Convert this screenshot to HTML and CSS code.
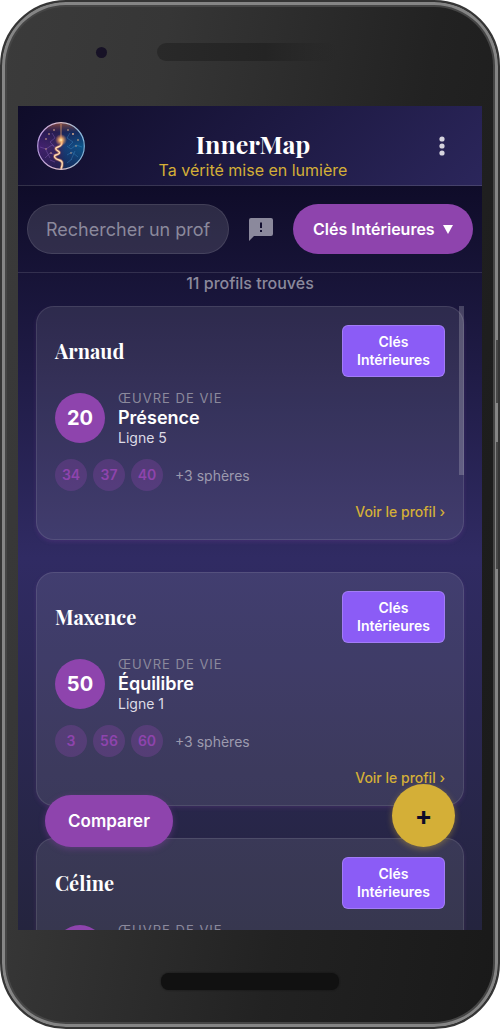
FILE: index.html
```html
<!DOCTYPE html>
<html lang="fr">
<head>
  <meta charset="UTF-8">
  <meta name="viewport" content="width=device-width, initial-scale=1.0">
  <title>InnerMap</title>
  <link rel="stylesheet" href="styles.css">
</head>
<body>
  <div class="phone">
    <span class="side-button side-button-power"></span>
    <span class="side-button side-button-volume"></span>

    <div class="bezel-top">
      <span class="camera"></span>
      <span class="speaker"></span>
    </div>

    <div class="screen">
      <header class="header">
        <svg class="logo" viewBox="0 0 48 48" aria-hidden="true">
          <defs>
            <linearGradient id="orb">
              <stop offset="0" stop-color="#43206f"/>
              <stop offset="0.42" stop-color="#392760"/>
              <stop offset="0.58" stop-color="#173f78"/>
              <stop offset="1" stop-color="#0b568b"/>
            </linearGradient>
            <linearGradient id="shade" x2="0" y2="1">
              <stop offset="0" stop-color="#8a4c3c" stop-opacity="0.9"/>
              <stop offset="0.2" stop-color="#1b1646" stop-opacity="0.6"/>
              <stop offset="0.5" stop-color="#1b1646" stop-opacity="0"/>
              <stop offset="1" stop-color="#10133a" stop-opacity="0.5"/>
            </linearGradient>
            <linearGradient id="rim">
              <stop offset="0" stop-color="#b79be0"/>
              <stop offset="0.5" stop-color="#e2c3c8"/>
              <stop offset="1" stop-color="#7db4dc"/>
            </linearGradient>
            <radialGradient id="glow">
              <stop offset="0" stop-color="#fff3c4"/>
              <stop offset="0.3" stop-color="#f9b66a" stop-opacity="0.9"/>
              <stop offset="1" stop-color="#f08a5a" stop-opacity="0"/>
            </radialGradient>
          </defs>
          <circle cx="24" cy="24" r="23" fill="url(#orb)"/>
          <circle cx="24" cy="24" r="23" fill="url(#shade)"/>
          <g fill="none" stroke-width="0.6" opacity="0.5">
            <path d="M3 25l6 2 6-4 4 3M8 36l5-5 6 2M9 28l4 8M15 11l3 5-5 4 4 4M18 40l-5-2" stroke="#a879dc"/>
            <path d="M45 25l-6-2-5 4-4-3M41 35l-6-5-5 3M38 29l-4 9M33 11l-3 5 6 4-4 4M30 41l5-4" stroke="#4ea7e0"/>
          </g>
          <g fill="#e8b48e">
            <circle cx="9" cy="17" r="0.8"/><circle cx="12" cy="12" r="0.8"/><circle cx="17" cy="8" r="0.8"/>
            <circle cx="31" cy="8" r="0.8"/><circle cx="36" cy="12" r="0.9"/><circle cx="41" cy="18" r="0.8"/>
            <circle cx="9" cy="27" r="0.7"/><circle cx="14" cy="31" r="0.7"/><circle cx="39" cy="24" r="0.7"/><circle cx="34" cy="31" r="0.7"/>
          </g>
          <path d="M24 2v16" stroke="#d89a6a" stroke-width="0.8"/>
          <path d="M24 18c2 4 0 6-3 7s-3 2 0 4 1 3-2 4-1 4 3 5 4 4 2 9" fill="none" stroke="#e9855f" stroke-width="3" opacity="0.5"/>
          <path d="M24 18c2 4 0 6-3 7s-3 2 0 4 1 3-2 4-1 4 3 5 4 4 2 9" fill="none" stroke="#ffdcb0" stroke-width="1.4"/>
          <circle cx="24" cy="18" r="6" fill="url(#glow)"/>
          <circle cx="24" cy="24" r="23.3" fill="none" stroke="url(#rim)" stroke-width="1.2"/>
        </svg>
        <div class="brand">
          <h1>InnerMap</h1>
          <p>Ta vérité mise en lumière</p>
        </div>
        <button class="menu-button" aria-label="Menu">
          <svg width="6" height="20" viewBox="0 0 6 20" fill="#d6d4de">
            <circle cx="3" cy="3" r="2.6"/>
            <circle cx="3" cy="10" r="2.6"/>
            <circle cx="3" cy="17" r="2.6"/>
          </svg>
        </button>
      </header>

      <main class="content">
        <div class="toolbar">
          <input class="search" type="text" placeholder="Rechercher un profil" aria-label="Rechercher un profil">
          <button class="feedback-button" aria-label="Signaler">
            <svg width="24" height="24" viewBox="0 0 24 24">
              <path fill="#8b899c" fill-rule="evenodd" d="M2 1h20a2 2 0 0 1 2 2v14a2 2 0 0 1-2 2H5l-5 5V3a2 2 0 0 1 2-2zM11 5.500v5.500h2V5.500zM11 13v2h2v-2z"/>
            </svg>
          </button>
          <div class="filter">
            <select aria-label="Type de profil">
              <option>Clés Intérieures</option>
            </select>
          </div>
        </div>

        <p class="count">11 profils trouvés</p>

        <div class="list">
          <article class="card">
            <div class="card-header">
              <h2>Arnaud</h2>
              <span class="badge">Clés Intérieures</span>
            </div>
            <div class="main-key">
              <span class="number">20</span>
              <div class="key-text">
                <div class="key-label">Œuvre de vie</div>
                <div class="key-name">Présence</div>
                <div class="key-line">Ligne 5</div>
              </div>
            </div>
            <div class="spheres">
              <span class="sphere">34</span>
              <span class="sphere">37</span>
              <span class="sphere">40</span>
              <span class="more">+3 sphères</span>
            </div>
            <a class="profile-link" href="#">Voir le profil ›</a>
          </article>

          <article class="card">
            <div class="card-header">
              <h2>Maxence</h2>
              <span class="badge">Clés Intérieures</span>
            </div>
            <div class="main-key">
              <span class="number">50</span>
              <div class="key-text">
                <div class="key-label">Œuvre de vie</div>
                <div class="key-name">Équilibre</div>
                <div class="key-line">Ligne 1</div>
              </div>
            </div>
            <div class="spheres">
              <span class="sphere">3</span>
              <span class="sphere">56</span>
              <span class="sphere">60</span>
              <span class="more">+3 sphères</span>
            </div>
            <a class="profile-link" href="#">Voir le profil ›</a>
          </article>

          <article class="card">
            <div class="card-header">
              <h2>Céline</h2>
              <span class="badge">Clés Intérieures</span>
            </div>
            <div class="main-key">
              <span class="number"></span>
              <div class="key-text">
                <div class="key-label">Œuvre de vie</div>
                <div class="key-name"></div>
                <div class="key-line"></div>
              </div>
            </div>
          </article>

          <span class="scroll-thumb"></span>
        </div>
      </main>

      <div class="floating">
        <button class="compare-button">Comparer</button>
        <button class="add-button" aria-label="Ajouter un profil">+</button>
      </div>
    </div>

    <div class="bezel-bottom">
      <span class="home-bar"></span>
    </div>
  </div>
</body>
</html>
```
FILE: styles.css
```css
* {
  box-sizing: border-box;
}

body {
  margin: 0;
  background-color: white;
  color: white;
  font-family: Inter, "Liberation Sans", sans-serif;
}

h1, h2, p {
  margin: 0;
}

button, input, select {
  font-family: inherit;
  border: none;
}

button, select {
  cursor: pointer;
}

/* Phone frame */
.phone {
  position: relative;
  display: flex;
  flex-direction: column;
  height: 100vh;
  padding: 0 16px;
  border: 2px solid #353535;
  border-radius: 66px;
  background: linear-gradient(100deg, #3b3b3b 0%, #363636 25%, #222 65%, #191919 100%);
  box-shadow: inset 0 0 0 3px #858585, inset 0 0 0 5px #454545;
  overflow: hidden;
}

.side-button {
  position: absolute;
  right: -2px;
  width: 4px;
  background-color: #484848;
}

.side-button-power {
  top: 338px;
  height: 63px;
}

.side-button-volume {
  top: 440px;
  height: 127px;
}

.bezel-top {
  display: flex;
  align-items: center;
  gap: 50px;
  height: 104px;
  padding: 0 78px 4px;
}

.camera {
  width: 11px;
  height: 11px;
  border-radius: 50%;
  background-color: #171226;
}

.speaker {
  width: 181px;
  height: 18px;
  border-radius: 9px;
  background: linear-gradient(90deg, #292929, #242424 60%, transparent);
}

.bezel-bottom {
  display: flex;
  align-items: center;
  justify-content: center;
  height: 97px;
  padding-top: 6px;
}

.home-bar {
  width: 178px;
  height: 17px;
  border-radius: 8px;
  background-color: #111;
  box-shadow: 0 0 2px #111;
}

.screen {
  position: relative;
  flex: 1;
  min-height: 0;
  display: flex;
  flex-direction: column;
  background-color: #0f0c29;
  overflow: hidden;
}

/* Header */
.header {
  display: grid;
  grid-template-columns: 48px 1fr 42px;
  align-items: center;
  height: 80px;
  padding: 0 19px;
  border-bottom: 1px solid rgba(255, 255, 255, 0.15);
  background: linear-gradient(135deg, #0f0c29, #2b265b);
}

.logo {
  width: 48px;
  height: 48px;
}

.brand {
  padding-top: 24px;
  height: 80px;
  text-align: center;
}

.brand h1 {
  font-family: "Playfair Display", "Liberation Serif", serif;
  font-size: 25px;
  line-height: 28px;
}

.brand p {
  color: #d4af37;
  font-size: 16px;
  line-height: 24px;
}

.menu-button {
  height: 44px;
  padding: 0;
  background: none;
}

.menu-button svg,
.feedback-button svg {
  display: block;
  margin: 0 auto;
}

/* Search and filter */
.content {
  flex: 1;
  min-height: 0;
  display: flex;
  flex-direction: column;
  background: linear-gradient(180deg, #0f0c29 0%, #302b63 50%, #24243e 100%);
}

.toolbar {
  display: flex;
  align-items: center;
  gap: 20px;
  padding: 18px 9px;
  border-bottom: 1px solid rgba(255, 255, 255, 0.12);
}

.search {
  flex: 1;
  min-width: 0;
  height: 50px;
  padding: 0 17px 0 18px;
  border: 1px solid rgba(255, 255, 255, 0.1);
  border-radius: 25px;
  background-color: rgba(255, 255, 255, 0.12);
  color: white;
  font-size: 18px;
}

.search::placeholder {
  color: #8b899c;
}

.feedback-button {
  padding: 0;
  background: none;
}

.filter {
  position: relative;
}

.filter select {
  appearance: none;
  height: 50px;
  padding: 0 38px 0 20px;
  border-radius: 25px;
  background-color: #8e44ad;
  color: white;
  font-size: 16px;
  font-weight: 600;
}

.filter::after {
  content: "";
  position: absolute;
  right: 20px;
  top: 21px;
  width: 10px;
  height: 9px;
  background-color: white;
  clip-path: polygon(0 0, 100% 0, 50% 100%);
  pointer-events: none;
}

.count {
  margin-bottom: 13px;
  color: #8b899c;
  font-size: 16px;
  font-weight: 500;
  line-height: 20px;
  text-align: center;
}

/* Profile cards */
.list {
  position: relative;
  flex: 1;
  min-height: 0;
  display: flex;
  flex-direction: column;
  gap: 32px;
  padding: 0 18px;
  overflow: hidden;
}

.scroll-thumb {
  position: absolute;
  top: 0;
  right: 18px;
  width: 5px;
  height: 169px;
  background-color: rgba(255, 255, 255, 0.2);
}

.card {
  flex-shrink: 0;
  display: flex;
  flex-direction: column;
  gap: 12px;
  padding: 18px;
  border: 1px solid rgba(255, 255, 255, 0.1);
  border-radius: 18px;
  background-color: rgba(255, 255, 255, 0.09);
  box-shadow: 0 2px 4px rgba(142, 68, 173, 0.2);
}

.card-header {
  display: flex;
  align-items: center;
  justify-content: space-between;
}

.card h2 {
  font-family: "Playfair Display", "Liberation Serif", serif;
  font-size: 20px;
  line-height: 28px;
}

.badge {
  width: min-content;
  padding: 7px 14px;
  border: 1px solid rgba(255, 255, 255, 0.2);
  border-radius: 6px;
  background-color: #8b5cf6;
  font-size: 14px;
  font-weight: 600;
  line-height: 18px;
  text-align: center;
}

.main-key {
  display: flex;
  align-items: center;
  gap: 13px;
}

.number {
  width: 50px;
  height: 50px;
  border-radius: 50%;
  background-color: #8e44ad;
  font-size: 20px;
  font-weight: 700;
  line-height: 50px;
  text-align: center;
}

.key-label {
  color: #8b899c;
  font-size: 13px;
  letter-spacing: 1px;
  line-height: 19px;
  text-transform: uppercase;
}

.key-name {
  min-height: 20px;
  font-size: 18px;
  font-weight: 600;
  line-height: 20px;
}

.key-line {
  min-height: 19px;
  color: #dddbe5;
  font-size: 14px;
  line-height: 19px;
}

.spheres {
  display: flex;
  align-items: center;
  gap: 6px;
}

.sphere {
  width: 32px;
  height: 32px;
  border-radius: 50%;
  background-color: rgba(142, 68, 173, 0.3);
  color: #8e44ad;
  font-size: 14px;
  font-weight: 600;
  line-height: 32px;
  text-align: center;
}

.more {
  padding-left: 6px;
  color: #9c9aae;
  font-size: 14px;
}

.profile-link {
  align-self: flex-end;
  color: #d4af37;
  font-size: 14px;
  font-weight: 500;
  line-height: 18px;
  text-decoration: none;
}

/* Floating buttons, over the list */
.floating {
  position: absolute;
  left: 27px;
  right: 27px;
  bottom: 83px;
  display: flex;
  align-items: flex-end;
  justify-content: space-between;
}

.compare-button {
  height: 52px;
  padding: 0 23px;
  border-radius: 26px;
  background-color: #8e44ad;
  box-shadow: 0 2px 6px rgba(142, 68, 173, 0.4);
  color: white;
  font-size: 17px;
  font-weight: 600;
}

.add-button {
  width: 63px;
  height: 63px;
  padding: 0;
  border-radius: 50%;
  background-color: #d4af37;
  box-shadow: 0 2px 6px rgba(212, 175, 55, 0.4);
  color: #0f0c29;
  font-size: 26px;
  font-weight: 700;
}
```
